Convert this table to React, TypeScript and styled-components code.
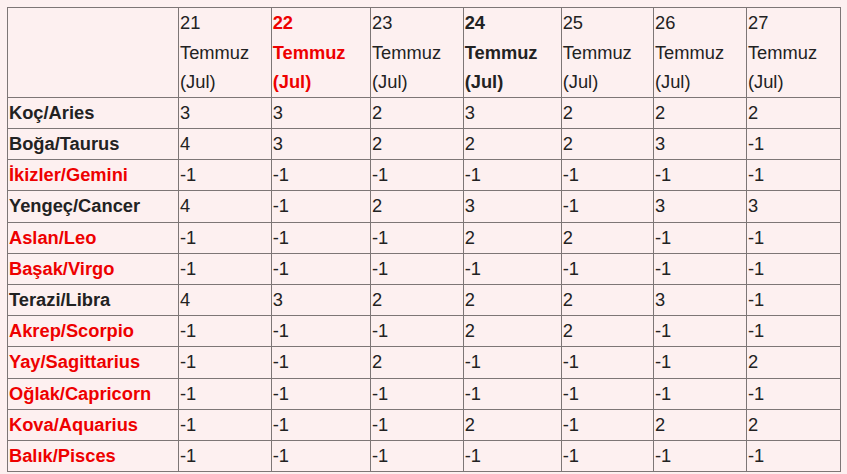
import styled, { createGlobalStyle } from 'styled-components';

const GlobalStyle = createGlobalStyle`
  html, body {
    margin: 0;
    padding: 0;
    background: #fdf0f0;
  }
  body {
    font-family: 'Liberation Sans', Arial, sans-serif;
    color: #222;
  }
`;

const Page = styled.div`
  padding: 7px 7px 0 7px;
`;

const Table = styled.table`
  border-collapse: collapse;
  table-layout: fixed;
  width: 833px;
  font-size: 18.3px;
  line-height: 29.6px;
  background: #fdf0f0;

  tbody td {
    line-height: 30.2px;
  }
`;

const Cell = styled.td<{ $red?: boolean; $bold?: boolean }>`
  border: 1px solid #7d7676;
  padding: 0 1px;
  vertical-align: top;
  white-space: nowrap;
  overflow: hidden;
  color: ${({ $red }) => ($red ? '#ee0000' : '#222')};
  font-weight: ${({ $bold }) => ($bold ? 700 : 400)};
`;

const SignCell = styled(Cell).attrs({ $bold: true })`
  vertical-align: middle;
`;

const Line = styled.div``;

const COLUMNS = [171, 92.7, 99.3, 92.7, 98, 92.3, 93, 94];

const DAYS = [
  { day: 21 },
  { day: 22, bold: true, red: true },
  { day: 23 },
  { day: 24, bold: true },
  { day: 25 },
  { day: 26 },
  { day: 27 },
];

const M = -1;

const SIGNS: { name: string; red?: boolean; values: number[] }[] = [
  { name: 'Koç/Aries', values: [3, 3, 2, 3, 2, 2, 2] },
  { name: 'Boğa/Taurus', values: [4, 3, 2, 2, 2, 3, M] },
  { name: 'İkizler/Gemini', red: true, values: [M, M, M, M, M, M, M] },
  { name: 'Yengeç/Cancer', values: [4, M, 2, 3, M, 3, 3] },
  { name: 'Aslan/Leo', red: true, values: [M, M, M, 2, 2, M, M] },
  { name: 'Başak/Virgo', red: true, values: [M, M, M, M, M, M, M] },
  { name: 'Terazi/Libra', values: [4, 3, 2, 2, 2, 3, M] },
  { name: 'Akrep/Scorpio', red: true, values: [M, M, M, 2, 2, M, M] },
  { name: 'Yay/Sagittarius', red: true, values: [M, M, 2, M, M, M, 2] },
  { name: 'Oğlak/Capricorn', red: true, values: [M, M, M, M, M, M, M] },
  { name: 'Kova/Aquarius', red: true, values: [M, M, M, 2, M, 2, 2] },
  { name: 'Balık/Pisces', red: true, values: [M, M, M, M, M, M, M] },
];

const App = () => {
  return (
    <Page>
      <GlobalStyle />
      <Table>
        <colgroup>
          {COLUMNS.map((w, i) => (
            <col key={i} style={{ width: w }} />
          ))}
        </colgroup>
        <thead>
          <tr>
            <Cell />
            {DAYS.map((d) => (
              <Cell key={d.day} $bold={d.bold} $red={d.red}>
                <Line>{d.day}</Line>
                <Line>Temmuz</Line>
                <Line>(Jul)</Line>
              </Cell>
            ))}
          </tr>
        </thead>
        <tbody>
          {SIGNS.map((sign) => (
            <tr key={sign.name}>
              <SignCell $red={sign.red}>{sign.name}</SignCell>
              {sign.values.map((v, i) => (
                <Cell key={i}>{v}</Cell>
              ))}
            </tr>
          ))}
        </tbody>
      </Table>
    </Page>
  );
};

export default App;
